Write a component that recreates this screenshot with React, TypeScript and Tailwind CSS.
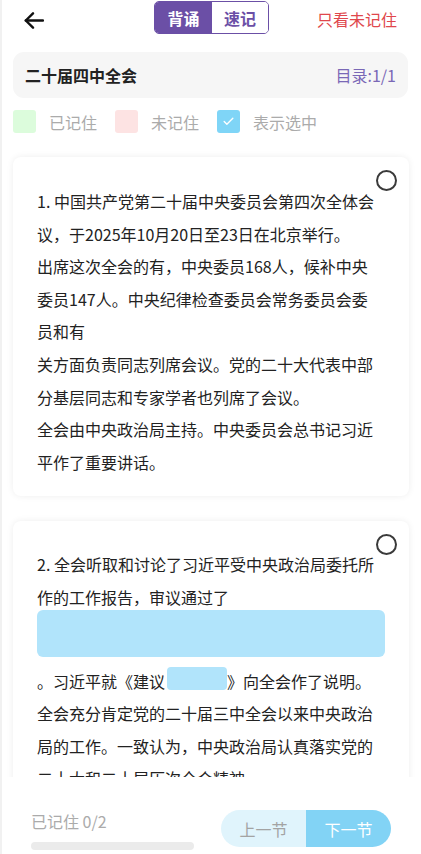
import React from 'react';
import { Check } from 'lucide-react';

const FONT = { fontFamily: '"Noto Sans CJK SC", "Noto Sans", sans-serif' };

const card1Lines = [
  '1. 中国共产党第二十届中央委员会第四次全体会',
  '议，于2025年10月20日至23日在北京举行。',
  '出席这次全会的有，中央委员168人，候补中央',
  '委员147人。中央纪律检查委员会常务委员会委',
  '员和有',
  '关方面负责同志列席会议。党的二十大代表中部',
  '分基层同志和专家学者也列席了会议。',
  '全会由中央政治局主持。中央委员会总书记习近',
  '平作了重要讲话。',
];

const card2Tail = [
  '全会充分肯定党的二十届三中全会以来中央政治',
  '局的工作。一致认为，中央政治局认真落实党的',
  '二十大和二十届历次全会精神',
];

const Circle = () => (
  <span className="absolute top-[13px] right-[12px] h-[21px] w-[21px] rounded-full border-[2.5px] border-[#3a3a3a]" />
);

const Line: React.FC<{ children: React.ReactNode; className?: string }> = ({ children, className = '' }) => (
  <div className={`whitespace-nowrap leading-[32.6px] ${className}`}>{children}</div>
);

export default function App() {
  return (
    <div
      className="h-[854px] w-[421px] flex flex-col bg-white border-l-2 border-[#f1f1f1] text-[16px] text-[#222] overflow-hidden"
      style={FONT}
    >
      {/* Header */}
      <div className="h-[37px] grid grid-cols-[1fr_auto_1fr] items-center shrink-0">
        <div className="pl-[22px] pt-[3px]">
          <svg width="20" height="17" viewBox="0 0 20 17" fill="none" stroke="#111" strokeWidth={2.4} strokeLinecap="round" strokeLinejoin="round">
            <path d="M19 8.5H1.8" />
            <path d="M9 1.3L1.8 8.5L9 15.7" />
          </svg>
        </div>
        <div className="flex h-[33px] rounded-[5px] border border-[#6b4fa6] overflow-hidden mt-[-2px]">
          <div className="w-[57px] flex items-center justify-center bg-[#6b4fa6] text-white font-bold">背诵</div>
          <div className="w-[56px] flex items-center justify-center bg-white text-[#6b4fa6] font-bold">速记</div>
        </div>
        <div className="flex justify-end pr-[24px] text-[#e0474c]">只看未记住</div>
      </div>

      {/* Title */}
      <div className="mt-[15px] ml-[11px] mr-[13px] h-[46px] rounded-[11px] bg-[#f6f6f6] flex items-center justify-between pl-[12px] pr-[12px] shrink-0">
        <span className="font-bold">二十届四中全会</span>
        <span className="text-[#7a68b6]">目录:1/1</span>
      </div>

      {/* Legend */}
      <div className="mt-[12px] ml-[11px] h-[23px] flex items-center text-[#ababab] shrink-0">
        <span className="h-[23px] w-[23px] rounded-[3px] bg-[#dcfcdc]" />
        <span className="ml-[13px]">已记住</span>
        <span className="ml-[18px] h-[23px] w-[23px] rounded-[3px] bg-[#fde3e3]" />
        <span className="ml-[13px]">未记住</span>
        <span className="ml-[18px] h-[23px] w-[23px] rounded-[3px] bg-[#7fd5f7] flex items-center justify-center">
          <Check size={13} color="#fff" strokeWidth={2.5} />
        </span>
        <span className="ml-[13px]">表示选中</span>
      </div>

      {/* Cards */}
      <div className="flex-1 overflow-hidden pt-[24px]">
        <div className="relative ml-[11px] mr-[12px] rounded-[8px] bg-white shadow-[0_0_7px_rgba(0,0,0,0.07)] pt-[28px] pb-[18px] px-[24px]">
          <Circle />
          {card1Lines.map((l, i) => (
            <Line key={i}>{l}</Line>
          ))}
        </div>

        <div className="relative mt-[25px] ml-[11px] mr-[12px] rounded-[8px] bg-white shadow-[0_0_7px_rgba(0,0,0,0.07)] pt-[27px] px-[24px]">
          <Circle />
          <Line>2. 全会听取和讨论了习近平受中央政治局委托所</Line>
          <Line>作的工作报告，审议通过了</Line>
          <div className="mt-[-4px] h-[47px] rounded-[6px] bg-[#b1e4fb]" />
          <Line className="mt-[8px] flex items-center">
            <span>。习近平就《建议</span>
            <span className="ml-[2px] h-[23px] w-[60px] rounded-[4px] bg-[#b1e4fb] mt-[-5px]" />
            <span>》向全会作了说明。</span>
          </Line>
          {card2Tail.map((l, i) => (
            <Line key={i}>{l}</Line>
          ))}
        </div>
      </div>

      {/* Bottom bar */}
      <div className="h-[77px] shrink-0 bg-white flex items-start justify-between pt-[33px] pl-[29px] pr-[30px]">
        <div className="flex flex-col">
          <span className="leading-[22px] text-[#ababab]">已记住 0/2</span>
          <div className="mt-[10px] h-[8px] w-[163px] rounded-full bg-[#ebebeb]" />
        </div>
        <div className="flex h-[37px] rounded-full overflow-hidden">
          <div className="w-[85px] flex items-center justify-center bg-[#e0f4fc] text-[#a3a3a3]">上一节</div>
          <div className="w-[85px] flex items-center justify-center bg-[#82d3f5] text-white">下一节</div>
        </div>
      </div>
    </div>
  );
}
